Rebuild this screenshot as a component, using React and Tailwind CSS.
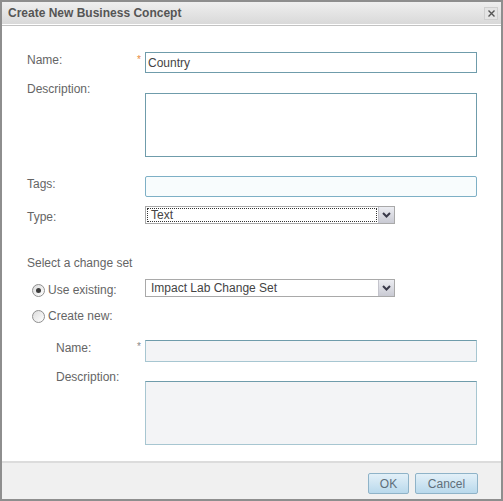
import React from "react";

const font = { fontFamily: '"Liberation Sans", Arial, sans-serif' };

const Chevron = () => (
  <svg width="9" height="6" viewBox="0 0 9 6">
    <path d="M1 1 L4.5 4.5 L8 1" fill="none" stroke="#3a3a4a" strokeWidth="2" />
  </svg>
);

const SelectBox = ({ value, focused }) => (
  <div className="w-[250px] h-[18px] flex border border-[#a9a9a9] bg-white">
    <div className="flex-1 p-[1px]">
      <div
        className={`h-full flex items-center pl-[3px] text-[12px] text-[#444] ${
          focused ? "border border-dotted border-[#333]" : "border border-transparent"
        }`}
      >
        {value}
      </div>
    </div>
    <div className="w-[16px] h-full flex items-center justify-center border-l border-[#c4c4cc] bg-gradient-to-b from-[#ecedf2] to-[#c9cad3]">
      <Chevron />
    </div>
  </div>
);

const Radio = ({ checked }) => (
  <div className="w-[13px] h-[13px] rounded-full border border-[#8f8f8f] bg-gradient-to-br from-[#dcdcdc] to-white flex items-center justify-center">
    {checked && <div className="w-[5px] h-[5px] rounded-full bg-[#3c3c3c]" />}
  </div>
);

const Label = ({ children, className = "" }) => (
  <div className={`w-[110px] shrink-0 text-[12px] leading-[14px] text-[#656565] ${className}`}>{children}</div>
);

const Star = ({ color }) => (
  <div className={`w-[8px] shrink-0 text-[10px] leading-[10px] ${color}`}>*</div>
);

export default function App() {
  return (
    <div style={font} className="w-[503px] h-[501px] bg-white">
      <div className="w-full h-full border-2 border-[#8e8e8e] flex flex-col">
        <div className="h-[22px] flex items-center justify-between pl-[6px] pr-[3px] bg-gradient-to-b from-[#efefef] to-[#d9d9d9]">
          <span className="text-[12px] font-bold text-[#555]">Create New Business Concept</span>
          <div className="w-[14px] h-[13px] mt-[1px] flex items-center justify-center border border-[#cfcfcf] bg-[#e4e4e4]">
            <svg width="7" height="7" viewBox="0 0 7 7">
              <path d="M0.5 0.5 L6.5 6.5 M6.5 0.5 L0.5 6.5" stroke="#555" strokeWidth="1.4" />
            </svg>
          </div>
        </div>
        <div className="h-px bg-white" />
        <div className="h-px bg-[#c3c3c3]" />

        <div className="flex-1 flex flex-col pl-[25px]">
          {/* Name */}
          <div className="flex items-start mt-[26px]">
            <Label className="mt-[1px]">Name:</Label>
            <Star color="text-[#e8893a] mt-[3px]" />
            <div className="w-[332px] h-[21px] border border-[#6f9cab] flex items-center pl-[2px] text-[12px] text-[#444]">
              Country
            </div>
          </div>
          {/* Description */}
          <div className="flex items-start mt-[20px]">
            <Label className="-mt-[11px]">Description:</Label>
            <div className="w-[8px] shrink-0" />
            <div className="w-[332px] h-[64px] border border-[#6f9cab]" />
          </div>
          {/* Tags */}
          <div className="flex items-start mt-[19px]">
            <Label className="mt-[1px]">Tags:</Label>
            <div className="w-[8px] shrink-0" />
            <div className="w-[332px] h-[21px] rounded-[2px] border border-[#7eb0c6] bg-[#f8fcfd]" />
          </div>
          {/* Type */}
          <div className="flex items-start mt-[9px]">
            <Label className="mt-[4px]">Type:</Label>
            <div className="w-[8px] shrink-0" />
            <SelectBox value="Text" focused />
          </div>

          <div className="mt-[32px] text-[12px] leading-[14px] text-[#656565]">Select a change set</div>

          {/* Use existing */}
          <div className="flex items-start mt-[9px]">
            <div className="w-[110px] shrink-0 flex items-center mt-[4px] pl-[5px] gap-[3px]">
              <Radio checked />
              <span className="text-[12px] leading-[14px] text-[#656565]">Use existing:</span>
            </div>
            <div className="w-[8px] shrink-0" />
            <SelectBox value="Impact Lab Change Set" />
          </div>
          {/* Create new */}
          <div className="flex items-center mt-[12px] pl-[5px] gap-[3px]">
            <Radio />
            <span className="text-[12px] leading-[14px] text-[#656565]">Create new:</span>
          </div>

          {/* Sub name */}
          <div className="flex items-start mt-[17px]">
            <Label className="mt-[1px] pl-[29px]">Name:</Label>
            <Star color="text-[#888] mt-[2px]" />
            <div className="w-[332px] h-[22px] border border-[#a7c6d1] border-t-[#6f9cab] bg-[#f3f4f6]" />
          </div>
          {/* Sub description */}
          <div className="flex items-start mt-[19px]">
            <Label className="-mt-[11px] pl-[29px]">Description:</Label>
            <div className="w-[8px] shrink-0" />
            <div className="w-[332px] h-[64px] border border-[#a7c6d1] border-t-[#6f9cab] bg-[#f3f4f6]" />
          </div>
        </div>

        <div className="h-[38px] border-t-2 border-[#dcdcdc] bg-[#f0f0f0] flex items-start justify-end gap-[6px] pr-[23px] pt-[10px]">
          <button className="w-[41px] h-[21px] border border-[#8fb3c8] rounded-[2px] bg-gradient-to-b from-[#e3f0f8] to-[#b9d9ec] text-[12px] text-[#5f6f7a]">
            OK
          </button>
          <button className="w-[63px] h-[21px] border border-[#8fb3c8] rounded-[2px] bg-gradient-to-b from-[#e3f0f8] to-[#b9d9ec] text-[12px] text-[#5f6f7a]">
            Cancel
          </button>
        </div>
      </div>
    </div>
  );
}
